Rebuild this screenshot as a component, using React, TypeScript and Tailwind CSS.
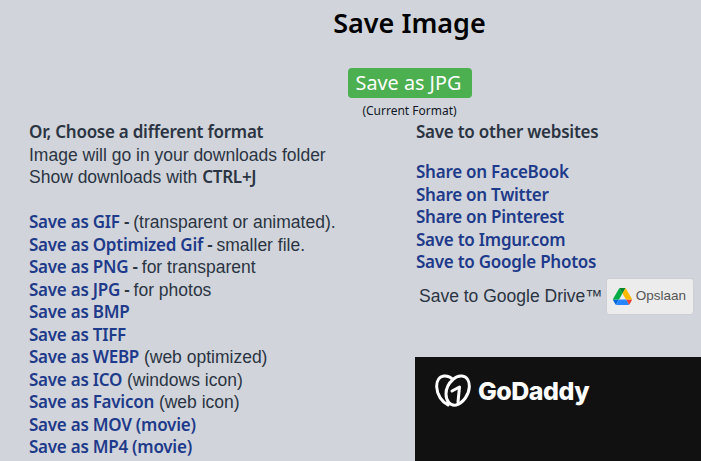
const L = "font-['Noto_Sans',sans-serif] text-[17px] font-semibold tracking-[-0.25px] text-[#1e3a8a]";
const B = "font-['Noto_Sans',sans-serif] text-[17px] font-semibold tracking-[-0.25px]";

function Row({ a, b, sep }: { a: string; b?: string; sep?: boolean }) {
  return (
    <div className="h-[22.5px] whitespace-nowrap">
      <span className={L}>{a}</span>
      {sep && <span className={B}> - </span>}
      {b && <span>{sep ? b : " " + b}</span>}
    </div>
  );
}

function Drive() {
  return (
    <svg width="19" height="17" viewBox="0 0 87.3 78" className="shrink-0">
      <path d="m6.6 66.85 3.85 6.65c.8 1.4 1.95 2.5 3.3 3.3l13.75-23.8h-27.5c0 1.55.4 3.1 1.2 4.5z" fill="#0066da" />
      <path d="m43.65 25-13.75-23.8c-1.35.8-2.5 1.9-3.3 3.3l-25.4 44a9.06 9.06 0 0 0-1.2 4.5h27.5z" fill="#00ac47" />
      <path d="m73.55 76.8c1.35-.8 2.5-1.9 3.3-3.3l1.6-2.75 7.65-13.25c.8-1.4 1.2-2.95 1.2-4.5h-27.5l5.85 11.5z" fill="#ea4335" />
      <path d="m43.65 25 13.75-23.8c-1.35-.8-2.9-1.2-4.5-1.2h-18.5c-1.6 0-3.15.45-4.5 1.2z" fill="#00832d" />
      <path d="m59.8 53h-32.3l-13.75 23.8c1.35.8 2.9 1.2 4.5 1.2h50.8c1.6 0 3.15-.45 4.5-1.2z" fill="#2684fc" />
      <path d="m73.4 26.5-12.7-22c-.8-1.4-1.95-2.5-3.3-3.3l-13.75 23.8 16.15 28h27.45c0-1.55-.4-3.1-1.2-4.5z" fill="#ffba00" />
    </svg>
  );
}

export default function App() {
  return (
    <div className="h-[461px] w-[701px] overflow-hidden bg-[#d1d5db] font-['Liberation_Sans',sans-serif] text-[17.5px] leading-[22.5px] text-[#2b3442]">
      <div className="pl-[118px]">
        <h1 className="pt-[5px] text-center font-['Noto_Sans',sans-serif] text-[27px] leading-[36px] font-semibold text-black">Save Image</h1>
        <div className="mt-[27px] flex flex-col items-center">
          <div className="flex h-[30px] w-[124px] items-center justify-center rounded-[4px] bg-[#4caf50] pr-[2px] font-['Noto_Sans',sans-serif] text-[19.8px] text-white">Save as JPG</div>
          <div className="mt-[4px] font-['Noto_Sans',sans-serif] text-[12px] leading-[18px] text-[#111827]">(Current Format)</div>
        </div>
      </div>
      <div className="mt-[1px] flex">
        <div className="w-[415px] pl-[29px]">
          <div className={"h-[22.5px] " + B}>Or, Choose a different format</div>
          <div className="h-[22.5px]">Image will go in your downloads folder</div>
          <div className="h-[22.5px]">Show downloads with <span className={B}>CTRL+J</span></div>
          <div className="h-[22.5px]" />
          <Row a="Save as GIF" b="(transparent or animated)." sep />
          <Row a="Save as Optimized Gif" b="smaller file." sep />
          <Row a="Save as PNG" b="for transparent" sep />
          <Row a="Save as JPG" b="for photos" sep />
          <Row a="Save as BMP" />
          <Row a="Save as TIFF" />
          <Row a="Save as WEBP" b="(web optimized)" />
          <Row a="Save as ICO" b="(windows icon)" />
          <Row a="Save as Favicon" b="(web icon)" />
          <Row a="Save as MOV (movie)" />
          <Row a="Save as MP4 (movie)" />
        </div>
        <div className="flex-1">
          <div className={"h-[22.5px] pl-px " + B}>Save to other websites</div>
          <div className="mt-[17.5px] pl-px">
            <Row a="Share on FaceBook" />
            <Row a="Share on Twitter" />
            <Row a="Share on Pinterest" />
            <Row a="Save to Imgur.com" />
            <Row a="Save to Google Photos" />
          </div>
          <div className="mt-[5px] flex items-center pl-[4px]">
            <span className="whitespace-nowrap">Save to Google Drive™</span>
            <div className="ml-[4px] flex h-[35px] w-[86px] items-center gap-[4px] rounded-[2px] bg-[#ececec] pl-[6px] text-[13.5px] text-[#555] shadow-[0_0_1px_rgba(0,0,0,0.2)]">
              <Drive />
              <span>Opslaan</span>
            </div>
          </div>
          <div className="mt-[43px] flex h-[104px] items-start gap-[7px] bg-[#111111] pt-[17px] pl-[20px] text-white">
            <svg width="36" height="33" viewBox="0 0 36 33" fill="none" stroke="white" strokeWidth="3" strokeLinecap="round" strokeLinejoin="round">
              <path d="M13 31C7 28 2 21 1.700 13C1.500 7 4 2.500 9 2C12 1.700 15.500 3 18 5.500C20.500 3 24 1.700 27 2C32 2.500 34.500 7 34.300 13C34 21 28 29 21 31C15 32 11 27 11 20C11 14 14 9 18 5.500" />
              <path d="M17 17L24.500 13L23 28" />
            </svg>
            <span className="font-['Inter',sans-serif] text-[25px] leading-[34px] font-extrabold tracking-[-0.5px]">GoDaddy</span>
          </div>
        </div>
      </div>
    </div>
  );
}
